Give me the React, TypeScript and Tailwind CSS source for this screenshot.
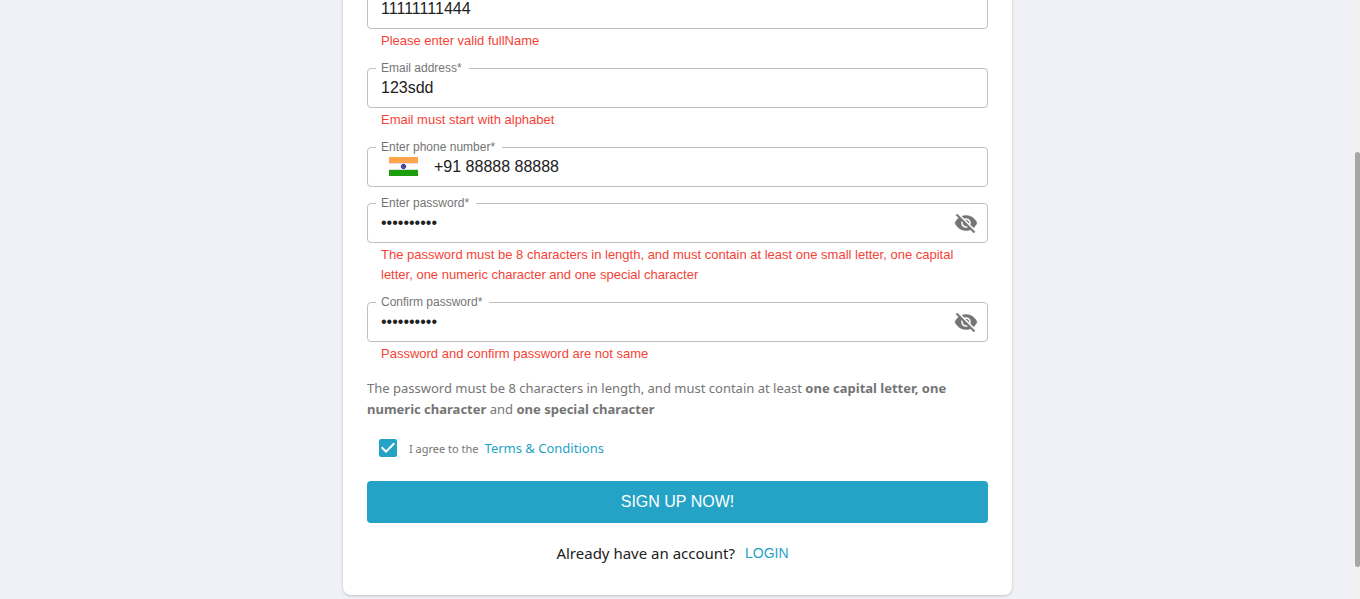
import { useState, type ReactNode } from "react";

function EyeOffIcon() {
  return (
    <svg viewBox="0 0 24 24" className="size-6 fill-[#757575] stroke-[#757575] stroke-[0.5]" aria-hidden="true">
      <path d="M12 7c2.76 0 5 2.24 5 5 0 .65-.13 1.26-.36 1.83l2.92 2.92c1.51-1.26 2.7-2.89 3.43-4.75-1.73-4.39-6-7.5-11-7.5-1.4 0-2.74.25-3.98.7l2.16 2.16C10.74 7.13 11.35 7 12 7zM2 4.27l2.28 2.28.46.46C3.08 8.3 1.78 10.02 1 12c1.73 4.39 6 7.5 11 7.5 1.55 0 3.03-.3 4.38-.84l.42.42L19.73 22 21 20.73 3.27 3 2 4.27zM7.53 9.8l1.55 1.55c-.05.21-.08.43-.08.65 0 1.66 1.34 3 3 3 .22 0 .44-.03.65-.08l1.55 1.55c-.67.33-1.41.53-2.2.53-2.76 0-5-2.24-5-5 0-.79.2-1.53.53-2.2zm4.31-.78l3.15 3.15.02-.16c0-1.66-1.34-3-3-3l-.17.01z" />
    </svg>
  );
}

function IndiaFlag() {
  return (
    <svg viewBox="0 0 29 19" className="mr-4 mb-[2px] ml-2 h-[19px] w-[29px] shrink-0" role="img" aria-label="India">
      <rect width="29" height="19" fill="#fff" />
      <rect width="29" height="6" fill="#ffa44a" />
      <rect y="6" width="29" height="1" fill="#e4ddea" />
      <rect y="12" width="29" height="1" fill="#d9dcea" />
      <rect y="13" width="29" height="6" fill="#1a9f0b" />
      <circle cx="14.5" cy="9.5" r="2.2" fill="#7c7cc8" stroke="#20208c" strokeWidth="0.9" />
      <circle cx="14.5" cy="9.5" r="0.9" fill="#15157d" />
      <path d="M12.4 9.5h4.2M14.5 7.4v4.2M13 8l3 3M16 8l-3 3" stroke="#3b3ba0" strokeWidth="0.35" />
    </svg>
  );
}

type FieldProps = {
  id: string;
  label?: string;
  ariaLabel?: string;
  value: string;
  type?: string;
  error?: string;
  start?: ReactNode;
};

function Field({ id, label, ariaLabel, value, type = "text", error, start }: FieldProps) {
  const [text, setText] = useState(value);
  const [visible, setVisible] = useState(false);
  const isPassword = type === "password";
  return (
    <div>
      <div className="relative flex h-10 items-center rounded border border-[#c0c0c0] px-[13px]">
        {label && (
          <label
            htmlFor={id}
            className="absolute -top-[9px] left-2 bg-white pr-[7px] pl-[5px] text-xs leading-4 text-[#757575]"
          >
            {label}*
          </label>
        )}
        {start}
        <input
          id={id}
          type={isPassword && visible ? "text" : type}
          value={text}
          onChange={(e) => setText(e.target.value)}
          aria-label={ariaLabel}
          aria-invalid={Boolean(error)}
          className="min-w-0 flex-1 bg-transparent text-base text-[#212121] outline-none"
        />
        {isPassword && (
          <button type="button" aria-label="Toggle password visibility" onClick={() => setVisible(!visible)} className="-mr-1">
            <EyeOffIcon />
          </button>
        )}
      </div>
      {error && <p className="mx-[14px] mt-[2px] mb-px text-[13px] leading-5 text-[#f44336]">{error}</p>}
    </div>
  );
}

export default function App() {
  const [agreed, setAgreed] = useState(true);
  return (
    <div className="relative min-h-screen overflow-hidden bg-[#f0f1f6] pr-[5px] pb-1 font-['Liberation_Sans',Arial,sans-serif]">
      <form
        onSubmit={(e) => e.preventDefault()}
        className="mx-auto -mt-4 w-full max-w-[669px] rounded-lg bg-white px-6 pt-[5px] pb-[30px] shadow-[0_1px_3px_rgba(0,0,0,0.2)]"
      >
        <div className="flex flex-col gap-4">
          <Field id="name" ariaLabel="Full name" value="11111111444" error="Please enter valid fullName" />
          <Field id="email" label="Email address" value="123sdd" error="Email must start with alphabet" />
          <Field id="phone" label="Enter phone number" type="tel" value="+91 88888 88888" start={<IndiaFlag />} />
          <Field
            id="password"
            label="Enter password"
            type="password"
            value="Abcdefgh12"
            error="The password must be 8 characters in length, and must contain at least one small letter, one capital letter, one numeric character and one special character"
          />
          <Field
            id="confirm"
            label="Confirm password"
            type="password"
            value="Abcdefgh13"
            error="Password and confirm password are not same"
          />
        </div>

        <p className="mt-[13px] font-['Noto_Sans',sans-serif] text-[13px] leading-[21px] text-[#757575]">
          The password must be 8 characters in length, and must contain at least{" "}
          <b>one capital letter, one numeric character</b> and <b>one special character</b>
        </p>

        <div className="mt-[19px] flex h-[18px] items-center px-3 font-['Noto_Sans',sans-serif] text-[#757575]">
          <span className="relative flex size-[18px]">
            <input
              id="agree"
              type="checkbox"
              checked={agreed}
              onChange={(e) => setAgreed(e.target.checked)}
              className="peer size-[18px] appearance-none rounded-xs border-2 border-[#757575] checked:border-[#24a3c6] checked:bg-[#24a3c6]"
            />
            <svg viewBox="3 3 18 18" className="pointer-events-none absolute inset-0 hidden size-[18px] fill-white peer-checked:block" aria-hidden="true">
              <path d="M10 17l-5-5 1.41-1.41L10 14.17l7.59-7.59L19 8l-9 9z" />
            </svg>
          </span>
          <div className="flex items-center gap-[6px] pt-[2px] pl-3">
            <label htmlFor="agree" className="text-[11px]">
              I agree to the
            </label>
            <a href="#terms" className="text-[13px] text-[#24a3c6]">
              Terms &amp; Conditions
            </a>
          </div>
        </div>

        <button type="submit" className="mt-6 h-[42px] w-full rounded bg-[#24a3c6] text-base text-white">
          SIGN UP NOW!
        </button>

        <div className="mt-[18px] flex items-center justify-center gap-[10px] pr-[10px]">
          <span className="font-['Noto_Sans',sans-serif] text-[15px] leading-6 text-[#212121]">Already have an account?</span>
          <a href="#login" className="text-sm text-[#24a3c6]">
            LOGIN
          </a>
        </div>
      </form>

      <div className="absolute inset-y-0 right-0 w-[5px] bg-[#f1f1f1]" aria-hidden="true">
        <div className="absolute top-[152px] h-[415px] w-[5px] rounded-full bg-[#a6a6a4]" />
      </div>
    </div>
  );
}
